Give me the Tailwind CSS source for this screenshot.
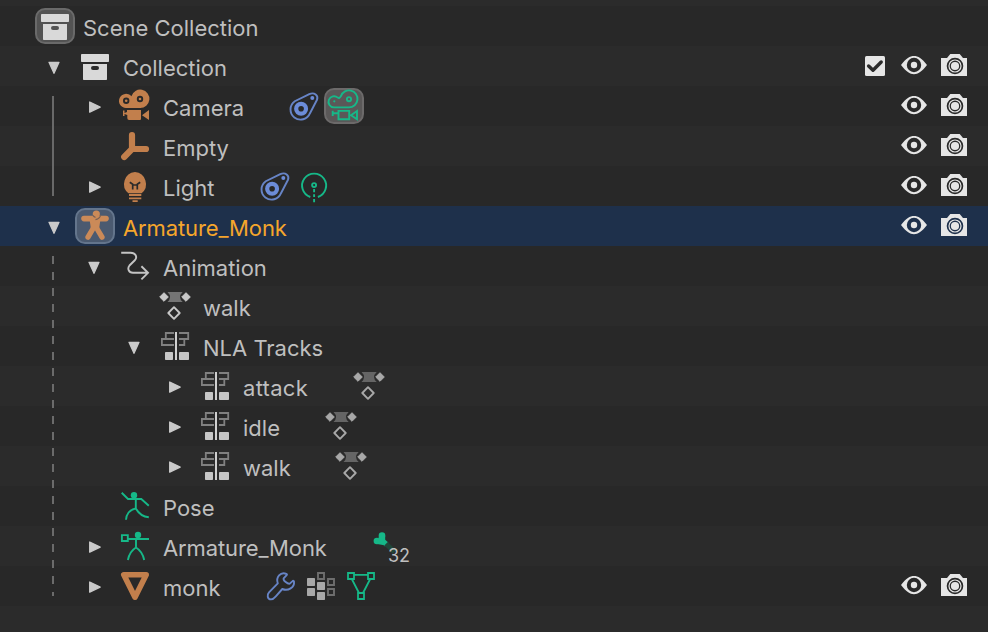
<!DOCTYPE html>
<html lang="en">
<head>
<meta charset="utf-8">
<title>Outliner</title>
<script src="https://cdn.jsdelivr.net/npm/@tailwindcss/browser@4"></script>
</head>
<body class="bg-[#2b2b2b]">
<svg class="hidden" xmlns="http://www.w3.org/2000/svg">
  <symbol id="down" viewBox="0 0 40 40"><path d="M14 16.3H24L19 27.3Z" fill="#cacaca" stroke="#cacaca" stroke-width="1.3" stroke-linejoin="round"/></symbol>
  <symbol id="right" viewBox="0 0 40 40"><path d="M14.7 16V26.2L25.2 21.1Z" fill="#cacaca" stroke="#cacaca" stroke-width="1.3" stroke-linejoin="round"/></symbol>
  <symbol id="box" viewBox="0 0 40 40"><rect x="6" y="8" width="28" height="8" rx=".8" fill="#d9d9d9"/><path fill-rule="evenodd" fill="#d9d9d9" d="M8 18H32V33.3Q32 34 31.3 34H8.7Q8 34 8 33.3ZM18 20A2 2 0 0 0 18 24H22A2 2 0 0 0 22 20Z"/></symbol>
  <symbol id="camera" viewBox="0 0 40 40"><g fill="#c27f4c"><path fill-rule="evenodd" d="M11 22A7.1 7.1 0 1 1 16.4 10.2A9.2 9.2 0 1 1 25 22ZM8 14.8a3.2 3.2 0 1 0 6.4 0a3.2 3.2 0 1 0-6.4 0ZM21.8 13a3.2 3.2 0 1 0 6.4 0a3.2 3.2 0 1 0-6.4 0Z"/><circle cx="11.2" cy="14.8" r="1.3"/><circle cx="25" cy="13" r="1.3"/><path d="M12 24H26V33Q26 34 25 34H14Q12.3 34 12.3 32V29L9.5 28V30H8V24.5H9.5V27L12 26ZM27 29.2L34 24V34Z"/></g></symbol>
  <symbol id="empty" viewBox="0 0 40 40"><path d="M17 9V23H31M17 23L9.2 31" fill="none" stroke="#c27f4c" stroke-width="6.2" stroke-linecap="round" stroke-linejoin="round"/></symbol>
  <symbol id="light" viewBox="0 0 40 40"><path d="M20 6A12 12 0 0 1 26.6 27.2H13.4A12 12 0 0 1 20 6Z" fill="#c27f4c"/><path d="M14.8 16.2L17.7 18.3V23.5M25.2 16.2L22.3 18.3V23.5M17.7 19H22.3" fill="none" stroke="#2b2b2b" stroke-width="1.7"/><path d="M14 29H26.3M14 32.3H26.3M17.5 35.2H22.7" stroke="#c27f4c" stroke-width="1.8" fill="none"/></symbol>
  <symbol id="constraint" viewBox="0 0 40 40"><path d="M25.3 8.2L10.8 15.2A10.1 10.1 0 1 0 26 27.2L33 13.8C34.6 9.6 30.4 5.8 25.3 8.2Z" fill="none" stroke="#6784c6" stroke-width="1.9"/><circle cx="17.1" cy="22.8" r="4.9" fill="none" stroke="#6c8cd8" stroke-width="4.2"/><circle cx="28.3" cy="12" r="2" fill="#6c8cd8"/></symbol>
  <symbol id="cameradata" viewBox="0 0 40 40"><g fill="none" stroke="#16b888" stroke-width="1.9"><path d="M10 21.4A5.6 5.6 0 1 1 13.8 11.6Q15.4 12.8 17 10A8.5 8.5 0 1 1 25 21.4Z"/><circle cx="25" cy="13.2" r="2.1"/><path d="M14.5 24.9H25.2V33.2H14.5ZM27 29.2L33 25V33.3ZM8.7 24.7V30M9 27.2L14 27"/></g><circle cx="10.3" cy="15.3" r="1.1" fill="#16b888"/></symbol>
  <symbol id="lightdata" viewBox="0 0 40 40"><g fill="none" stroke="#16b888" stroke-width="1.9"><path d="M15.3 31A12 12 0 1 1 22.9 31"/><circle cx="19.1" cy="19.1" r="2"/><path d="M19.1 23V26.2M19.1 28.3V31M19.1 33V36.2"/></g></symbol>
  <symbol id="armature" viewBox="0 0 40 40"><g stroke="#cb8a58" fill="none" stroke-linecap="round"><path d="M9 12.6H31" stroke-width="5.6"/><path d="M18.4 22L13 31.2M21.6 22L27 31.2" stroke-width="5.3"/></g><path d="M14.5 13H25.5L24.2 22H15.8Z" fill="#cb8a58"/><circle cx="21.3" cy="8" r="3.6" fill="#cb8a58"/><path d="M17.8 9.3Q18.6 11 20.5 11.3M20.5 13.6Q25.2 12.6 25.6 9" fill="none" stroke="#765f54" stroke-width="1.2"/></symbol>
  <symbol id="anim" viewBox="0 0 40 40"><path d="M6.2 6.8H15.5C20.5 6.8 22.8 11 19.8 14.3L14.5 19.5C12.2 22.3 13.4 26.8 18 26.8H33M26.4 20.3L33 26.8L26.4 33.4" fill="none" stroke="#c4c4c4" stroke-width="1.9"/></symbol>
  <symbol id="action" viewBox="0 0 40 40"><path d="M12.5 6H27.7Q22.4 11 27.7 16H12.5Q17.6 11 12.5 6Z" fill="#747474"/><g fill="#c8c8c8" stroke="#c8c8c8" stroke-linejoin="round"><path d="M9 6.7L13.3 11L9 15.3L4.7 11ZM31 6.7L35.3 11L31 15.3L26.7 11Z"/><path d="M19 21.2L24.7 27L19 32.8L13.3 27Z" fill="none" stroke-width="1.9"/></g></symbol>
  <symbol id="nla" viewBox="0 0 40 40"><path d="M19 7H10.8V13M19 13H6.9V19H19M24 7H33.2V13H24M29.3 13V19H24" fill="none" stroke="#808080" stroke-width="1.8"/><path d="M20 6H22V34H20Z" fill="#d0d0d0"/><rect x="10" y="26" width="8" height="8" rx=".7" fill="#c6c6c6"/><rect x="24" y="26" width="10" height="8" rx=".7" fill="#c6c6c6"/></symbol>
  <symbol id="pose" viewBox="0 0 40 40"><circle cx="19" cy="9.3" r="3.2" fill="#16b888"/><path d="M6.7 6.8L13 13H26.3L33.8 19.7M20.8 13V22.4Q11.7 24.5 11 33.8M20.8 22.4Q25.5 30.5 33.8 31.3" fill="none" stroke="#16b888" stroke-width="1.9"/></symbol>
  <symbol id="armdata" viewBox="0 0 40 40"><circle cx="23" cy="9" r="3.2" fill="#16b888"/><path d="M6.9 9.1H12.8V15H6.9ZM13 13H34M21 13V21.5Q14.5 25.5 12.9 34M21 21.5Q27.5 25.5 29.2 34" fill="none" stroke="#16b888" stroke-width="1.9"/></symbol>
  <symbol id="mesh" viewBox="0 0 40 40"><path d="M8.8 8.8H31.2L20 31.2Z" fill="none" stroke="#c27f4c" stroke-width="5.6" stroke-linejoin="round"/></symbol>
  <symbol id="wrench" viewBox="0 0 40 40"><path d="M25.3 7.8C19.5 5.5 14.6 11.2 16.8 17.3L8 26.3C5.8 28.7 6.3 33.3 10 33.4C12.2 33.4 13.3 32.2 14.8 30.4L21.3 23C27 25.4 33.8 21.5 33 15.6C32.9 14.7 32 14.6 31.5 15.1L28.8 17.6C26.8 18.3 22 14.5 22.6 12.4L25.7 9.2C26.2 8.6 26 8.1 25.3 7.8Z" fill="none" stroke="#6784c6" stroke-width="1.9" stroke-linejoin="round"/></symbol>
  <symbol id="vgroup" viewBox="0 0 40 40"><g fill="#a8a8a8"><rect x="6" y="12" width="8" height="8" rx=".7"/><rect x="6" y="22" width="8" height="8" rx=".7"/><rect x="16" y="16" width="8" height="8" rx=".7"/><rect x="16" y="26" width="8" height="8" rx=".7"/></g><path d="M17 7H23V13H17ZM27 13H33V19H27ZM27 23H33V29H27Z" fill="none" stroke="#6e6e6e" stroke-width="1.9"/></symbol>
  <symbol id="meshdata" viewBox="0 0 40 40"><path d="M7 7H13V13H7ZM27 7H33V13H27ZM17 27H23V33H17ZM13 8.8H27M10.8 13L18 27M29.2 13L22 27" fill="none" stroke="#16b888" stroke-width="1.8"/></symbol>
  <symbol id="bone" viewBox="0 0 40 40"><path d="M20 14.5L24.7 18.5" stroke="#16b888" stroke-width="5" fill="none"/><path d="M24 17.8L32.5 26" stroke="#204638" stroke-width="5" fill="none"/><g fill="#16b888"><circle cx="20" cy="9.5" r="3.3"/><circle cx="14.9" cy="15" r="3.3"/><path d="M17 10H23.2V17L21 19L15 18Z"/></g></symbol>
  <symbol id="check" viewBox="0 0 40 40"><rect x="10" y="10" width="20" height="20" rx="1.5" fill="#e6e6e6"/><path d="M13.6 20L18 24.2L26.2 16" fill="none" stroke="#2b2b2b" stroke-width="3.4" stroke-linecap="round" stroke-linejoin="round"/></symbol>
  <symbol id="eye" viewBox="0 0 40 40"><path fill="#e6e6e6" fill-rule="evenodd" d="M7 19C12 12.4 16 10 20 10S28 12.4 33 19C28 25.6 24 28.2 20 28.2S12 25.6 7 19ZM12.8 19a7.2 7.2 0 1 0 14.4 0a7.2 7.2 0 1 0-14.4 0Z"/><circle cx="20" cy="19" r="3.2" fill="#e6e6e6"/></symbol>
  <symbol id="render" viewBox="0 0 40 40"><path fill="#e6e6e6" fill-rule="evenodd" d="M7 12H13L16.3 8H25.7L29 12H33V30H7ZM12.7 20a8.3 8.3 0 1 0 16.6 0a8.3 8.3 0 1 0-16.6 0Z"/><circle cx="21" cy="20" r="6" fill="none" stroke="#e6e6e6" stroke-width="1.2"/><circle cx="21" cy="20" r="4.1" fill="#e6e6e6"/></symbol>
</svg>

<main class="relative h-[632px] w-[988px] overflow-hidden pt-1.5 font-['Inter','Liberation_Sans',sans-serif] text-[22px] text-[#bfbfbf]">
  <div id="tree" class="flex flex-col"></div>
  <div class="absolute left-[52px] top-24 h-[100px] w-[2px] bg-[#696969]"></div>
  <div class="absolute left-[52px] top-64 h-[340px] w-[2px] bg-[repeating-linear-gradient(to_bottom,#6b6b6b_0_8px,transparent_8px_16px)]"></div>
</main>

<script>
const rows = [
  {d:0, icon:'box', on:true, name:'Scene Collection'},
  {d:1, arrow:'down', icon:'box', name:'Collection', vis:['check','eye','render']},
  {d:2, arrow:'right', icon:'camera', name:'Camera', w:121, extra:['constraint','cameradata*'], vis:['eye','render']},
  {d:2, icon:'empty', name:'Empty', vis:['eye','render']},
  {d:2, arrow:'right', icon:'light', name:'Light', w:92, extra:['constraint','lightdata'], vis:['eye','render']},
  {d:1, arrow:'down', icon:'armature', on:true, selected:true, name:'Armature_Monk', tight:true, vis:['eye','render']},
  {d:2, arrow:'down', icon:'anim', name:'Animation'},
  {d:3, icon:'action', name:'walk'},
  {d:3, arrow:'down', icon:'nla', name:'NLA Tracks'},
  {d:4, arrow:'right', icon:'nla', name:'attack', wide:true, w:106, extra:['action-']},
  {d:4, arrow:'right', icon:'nla', name:'idle', w:78, extra:['action-']},
  {d:4, arrow:'right', icon:'nla', name:'walk', w:88, extra:['action-']},
  {d:2, icon:'pose', name:'Pose'},
  {d:2, arrow:'right', icon:'armdata', name:'Armature_Monk', tight:true, w:199, extra:['bone'], count:32},
  {d:2, arrow:'right', icon:'mesh', name:'monk', w:98, extra:['wrench','vgroup','meshdata'], vis:['eye','render']},
];
const svg = (id, cls = '') => `<svg class="relative size-10 shrink-0 ${cls}"><use href="#${id}"/></svg>`;
const slot = (id, lit, tint) => `<span class="relative size-10 shrink-0">${lit ? `<span class="absolute inset-x-0 inset-y-0.5 rounded-[10px] border-2 ${tint}"></span>` : ''}${svg(id)}</span>`;
document.getElementById('tree').innerHTML = rows.map((r, i) => {
  const bg = r.selected ? 'bg-[#1e304b]' : i % 2 ? 'bg-[#2b2b2b]' : 'bg-[#282828]';
  const tint = r.selected ? 'bg-[#4b5a70] border-[#64758c]' : 'bg-[#535353] border-[#6a6a6a]';
  const track = r.tight ? 'tracking-[-0.12px]' : r.wide ? 'tracking-[0.3px]' : '';
  const extras = (r.extra || []).map(e =>
    e.endsWith('*') ? slot(e.slice(0, -1), true, 'bg-[#5a5858] border-[#6c6a6a]') :
    e.endsWith('-') ? svg(e.slice(0, -1), 'opacity-80') : svg(e)).join('');
  return `<div class="flex h-10 items-center pr-[14px] ${bg}">
    <span class="shrink-0" style="width:${r.d ? r.d * 40 - 5 : 35}px"></span>
    ${r.d ? `<span class="size-10 shrink-0">${r.arrow ? svg(r.arrow) : ''}</span>` : ''}
    ${slot(r.icon, r.on, tint)}
    <span class="ml-2 shrink-0 whitespace-nowrap pt-1 leading-9 ${track} ${r.selected ? 'text-[#f5a62c]' : ''}" style="width:${r.w ? r.w + 'px' : 'auto'}">${r.name}</span>
    <span class="relative flex">${extras}${r.count ? `<span class="absolute left-[26px] top-[19px] text-[18px] leading-[22px]">${r.count}</span>` : ''}</span>
    <span class="ml-auto flex">${(r.vis || []).map(v => `<span class="${v === 'check' ? '-mr-px' : ''}">${svg(v)}</span>`).join('')}</span>
  </div>`;
}).join('');
</script>
</body>
</html>
